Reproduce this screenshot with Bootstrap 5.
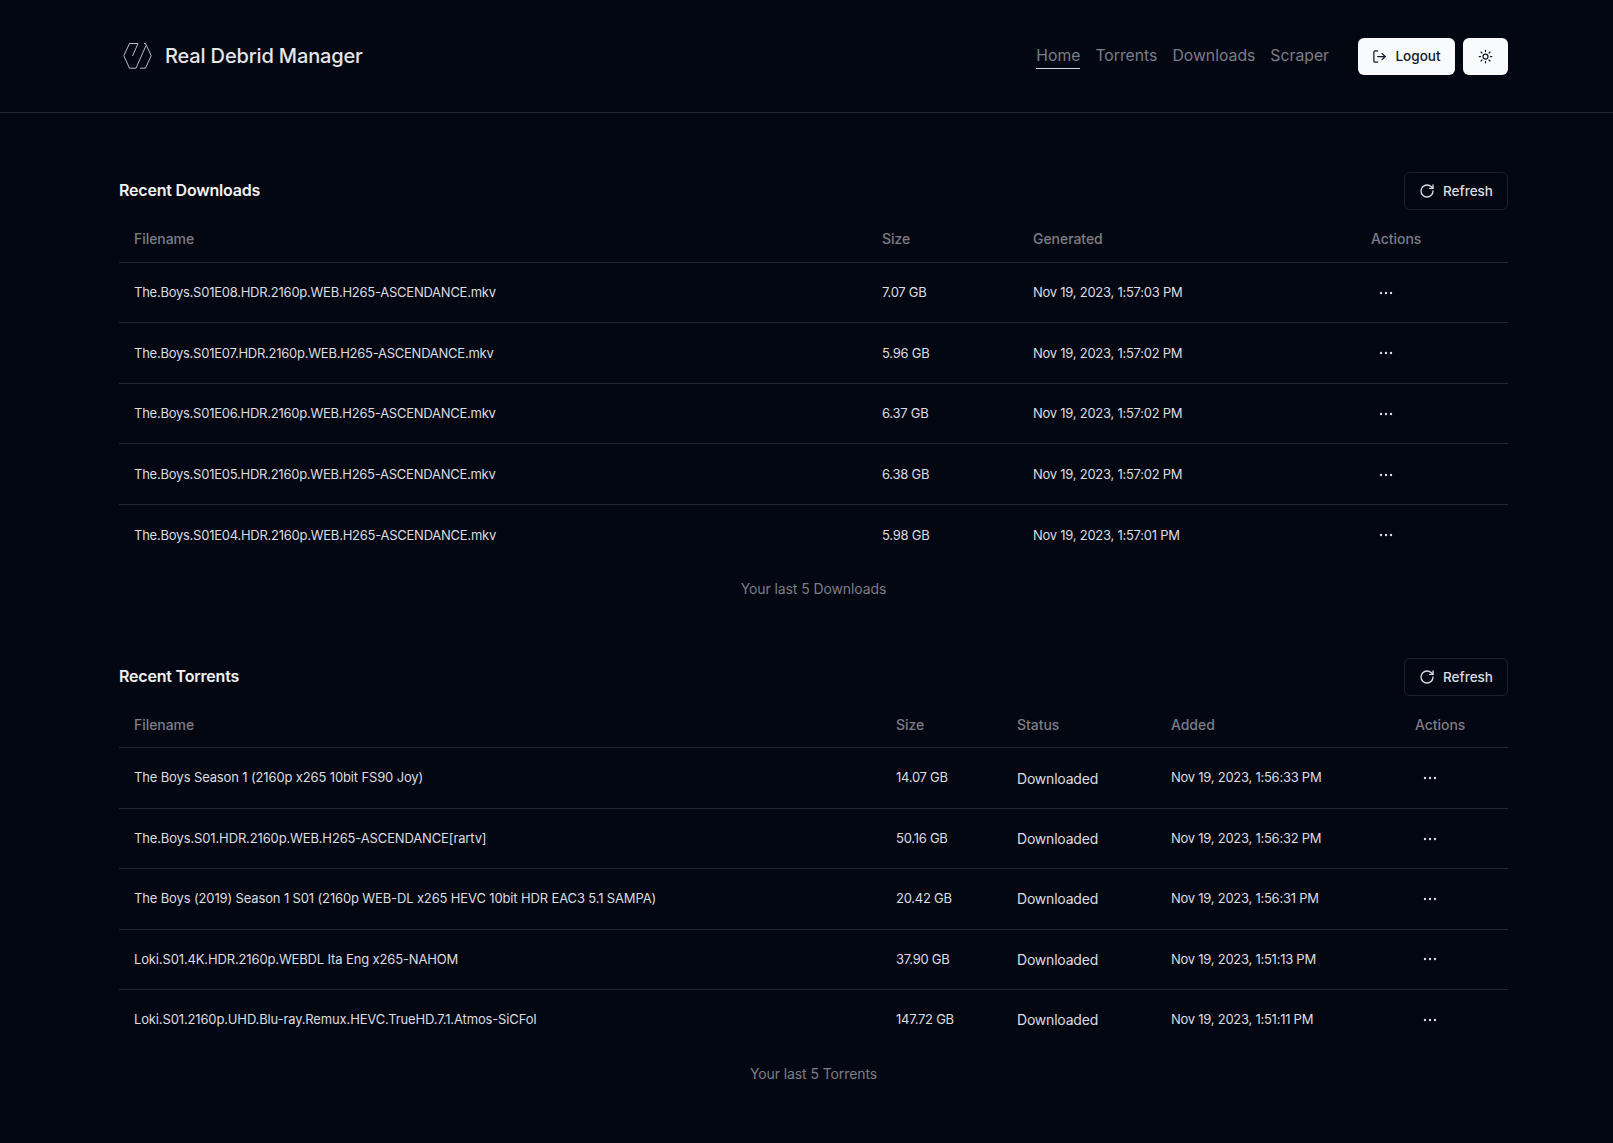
<!DOCTYPE html>
<html lang="en" data-bs-theme="dark">
<head>
<meta charset="utf-8">
<title>Real Debrid Manager</title>
<link href="https://cdn.jsdelivr.net/npm/bootstrap@5.3.0/dist/css/bootstrap.min.css" rel="stylesheet">
<style>
body{background:#030711;color:#dcdde2;font-family:"Inter","Noto Sans",sans-serif;font-size:14px;min-height:1143px}
.top-bar{height:113px;border-bottom:1px solid #24262e}
.wrap{width:1389px;margin-left:119px}
.brand-mark{margin-left:4px}
.brand-name{font-size:20px;font-weight:500;color:#e4e5e9;letter-spacing:-.15px;margin-left:13px}
.nav-row{gap:15px;margin-right:29px}
.nav-item-link{font-size:15.75px;color:#7c7d88;text-decoration:none;height:26px;line-height:26px}
.nav-item-link.on{border-bottom:1px solid #d5d6db}
.btn-light-rd{background:#f8fafc;color:#0f172a;border:0;border-radius:6px;height:37px;font-size:13.5px;font-weight:500;display:flex;align-items:center;padding:0}
.btn-logout{width:97px;gap:8px;justify-content:center}
.btn-theme{width:45px;justify-content:center}
.section-a{margin-top:59px}
.section-b{margin-top:45px}
.sec-title{font-size:16px;font-weight:600;color:#f1f2f5;margin:0;letter-spacing:-.2px}
.btn-refresh{width:104px;height:38px;background:transparent;border:1px solid #1f2129;border-radius:6px;color:#dcdde2;font-size:13.5px;font-weight:500;display:flex;align-items:center;justify-content:center;gap:8px;padding:0}
.rd-table{--bs-table-bg:transparent;--bs-table-color:#dcdde2;margin:0;table-layout:fixed;width:1389px}
.rd-table th{font-size:14px;font-weight:500;color:#7c7d88;height:52px;padding:5px 15px 0;border-bottom:1px solid #24262e;vertical-align:middle;letter-spacing:-.05px}
.rd-table td{font-size:13px;letter-spacing:-.25px;height:60.6px;padding:1px 15px 0;border-bottom:1px solid #24262e;vertical-align:middle;color:#dcdde2}
.section-b .rd-table td{padding-top:0;height:60.4px}
.rd-table td.name-wide{letter-spacing:-.14px}
.rd-table td.status-cell{font-size:14px;letter-spacing:-.2px}
.rd-table tr.nob td{border-bottom:0}
.foot-note{color:#7c7d88;text-align:center;font-size:14px;letter-spacing:-.1px;height:49px;display:flex;align-items:center;justify-content:center;margin-top:-1px}
.dots{display:block;margin-left:7px}
.w1a{width:748px}.w1b{width:151px}.w1c{width:338px}.w1d{width:152px}
.w2a{width:762px}.w2b{width:121px}.w2c{width:154px}.w2d{width:244px}.w2e{width:108px}
</style>
</head>
<body>
<header class="top-bar d-flex align-items-center">
  <div class="wrap d-flex align-items-center justify-content-between">
    <a class="d-flex align-items-center text-decoration-none" href="#">
      <svg class="brand-mark" width="29" height="26" viewBox="0 0 29 26" fill="none" stroke="#b9bdc6" stroke-width="1" stroke-linejoin="round"><path d="M15 .5H6.5L.8 12.7 6.5 25.2H13L23 2.5"/><path d="M15 .5 9.5 13"/><path d="M21 .5h1.5l5.7 12.2-5.7 12.5H17"/></svg>
      <span class="brand-name">Real Debrid Manager</span>
    </a>
    <div class="d-flex align-items-center">
      <nav class="nav-row d-flex align-items-center">
        <a class="nav-item-link on" href="#">Home</a>
        <a class="nav-item-link" href="#">Torrents</a>
        <a class="nav-item-link" href="#">Downloads</a>
        <a class="nav-item-link" href="#">Scraper</a>
      </nav>
      <button class="btn-light-rd btn-logout" type="button">
        <svg width="15" height="15" viewBox="0 0 24 24" fill="none" stroke="#0f172a" stroke-width="2" stroke-linecap="round" stroke-linejoin="round"><path d="M9 21H5a2 2 0 0 1-2-2V5a2 2 0 0 1 2-2h4"/><path d="M16 17l5-5-5-5"/><path d="M21 12H9"/></svg>
        Logout
      </button>
      <button class="btn-light-rd btn-theme ms-2" type="button" aria-label="Theme">
        <svg width="15" height="15" viewBox="0 0 24 24" fill="none" stroke="#0f172a" stroke-width="2" stroke-linecap="round"><circle cx="12" cy="12" r="4"/><path d="M12 2v2M12 20v2M4.9 4.9l1.4 1.4M17.7 17.7l1.4 1.4M2 12h2M20 12h2M6.3 17.7l-1.4 1.4M19.1 4.9l-1.4 1.4"/></svg>
      </button>
    </div>
  </div>
</header>
<main class="wrap">
  <section class="section-a">
    <div class="d-flex justify-content-between align-items-center">
      <h2 class="sec-title">Recent Downloads</h2>
      <button class="btn-refresh" type="button"><svg width="16" height="16" viewBox="0 0 24 24" fill="none" stroke="#dcdde2" stroke-width="2" stroke-linecap="round" stroke-linejoin="round"><path d="M21 12a9 9 0 1 1-9-9c2.5 0 4.8 1 6.7 2.7L21 8"/><path d="M21 3v5h-5"/></svg>Refresh</button>
    </div>
    <table class="table rd-table">
      <thead><tr><th class="w1a">Filename</th><th class="w1b">Size</th><th class="w1c">Generated</th><th class="w1d">Actions</th></tr></thead>
      <tbody>
        <tr><td>The.Boys.S01E08.HDR.2160p.WEB.H265-ASCENDANCE.mkv</td><td>7.07 GB</td><td>Nov 19, 2023, 1:57:03 PM</td><td><svg class="dots" width="16" height="16" viewBox="0 0 16 16" fill="#dcdde2"><circle cx="3" cy="8" r="1.2"/><circle cx="8" cy="8" r="1.2"/><circle cx="13" cy="8" r="1.2"/></svg></td></tr>
        <tr><td>The.Boys.S01E07.HDR.2160p.WEB.H265-ASCENDANCE.mkv</td><td>5.96 GB</td><td>Nov 19, 2023, 1:57:02 PM</td><td><svg class="dots" width="16" height="16" viewBox="0 0 16 16" fill="#dcdde2"><circle cx="3" cy="8" r="1.2"/><circle cx="8" cy="8" r="1.2"/><circle cx="13" cy="8" r="1.2"/></svg></td></tr>
        <tr><td>The.Boys.S01E06.HDR.2160p.WEB.H265-ASCENDANCE.mkv</td><td>6.37 GB</td><td>Nov 19, 2023, 1:57:02 PM</td><td><svg class="dots" width="16" height="16" viewBox="0 0 16 16" fill="#dcdde2"><circle cx="3" cy="8" r="1.2"/><circle cx="8" cy="8" r="1.2"/><circle cx="13" cy="8" r="1.2"/></svg></td></tr>
        <tr><td>The.Boys.S01E05.HDR.2160p.WEB.H265-ASCENDANCE.mkv</td><td>6.38 GB</td><td>Nov 19, 2023, 1:57:02 PM</td><td><svg class="dots" width="16" height="16" viewBox="0 0 16 16" fill="#dcdde2"><circle cx="3" cy="8" r="1.2"/><circle cx="8" cy="8" r="1.2"/><circle cx="13" cy="8" r="1.2"/></svg></td></tr>
        <tr class="nob"><td>The.Boys.S01E04.HDR.2160p.WEB.H265-ASCENDANCE.mkv</td><td>5.98 GB</td><td>Nov 19, 2023, 1:57:01 PM</td><td><svg class="dots" width="16" height="16" viewBox="0 0 16 16" fill="#dcdde2"><circle cx="3" cy="8" r="1.2"/><circle cx="8" cy="8" r="1.2"/><circle cx="13" cy="8" r="1.2"/></svg></td></tr>
      </tbody>
    </table>
    <div class="foot-note">Your last 5 Downloads</div>
  </section>
  <section class="section-b">
    <div class="d-flex justify-content-between align-items-center">
      <h2 class="sec-title">Recent Torrents</h2>
      <button class="btn-refresh" type="button"><svg width="16" height="16" viewBox="0 0 24 24" fill="none" stroke="#dcdde2" stroke-width="2" stroke-linecap="round" stroke-linejoin="round"><path d="M21 12a9 9 0 1 1-9-9c2.5 0 4.8 1 6.7 2.7L21 8"/><path d="M21 3v5h-5"/></svg>Refresh</button>
    </div>
    <table class="table rd-table">
      <thead><tr><th class="w2a">Filename</th><th class="w2b">Size</th><th class="w2c">Status</th><th class="w2d">Added</th><th class="w2e">Actions</th></tr></thead>
      <tbody>
        <tr><td class="name-wide">The Boys Season 1 (2160p x265 10bit FS90 Joy)</td><td>14.07 GB</td><td class="status-cell">Downloaded</td><td>Nov 19, 2023, 1:56:33 PM</td><td><svg class="dots" width="16" height="16" viewBox="0 0 16 16" fill="#dcdde2"><circle cx="3" cy="8" r="1.2"/><circle cx="8" cy="8" r="1.2"/><circle cx="13" cy="8" r="1.2"/></svg></td></tr>
        <tr><td class="name-wide">The.Boys.S01.HDR.2160p.WEB.H265-ASCENDANCE[rartv]</td><td>50.16 GB</td><td class="status-cell">Downloaded</td><td>Nov 19, 2023, 1:56:32 PM</td><td><svg class="dots" width="16" height="16" viewBox="0 0 16 16" fill="#dcdde2"><circle cx="3" cy="8" r="1.2"/><circle cx="8" cy="8" r="1.2"/><circle cx="13" cy="8" r="1.2"/></svg></td></tr>
        <tr><td class="name-wide">The Boys (2019) Season 1 S01 (2160p WEB-DL x265 HEVC 10bit HDR EAC3 5.1 SAMPA)</td><td>20.42 GB</td><td class="status-cell">Downloaded</td><td>Nov 19, 2023, 1:56:31 PM</td><td><svg class="dots" width="16" height="16" viewBox="0 0 16 16" fill="#dcdde2"><circle cx="3" cy="8" r="1.2"/><circle cx="8" cy="8" r="1.2"/><circle cx="13" cy="8" r="1.2"/></svg></td></tr>
        <tr><td class="name-wide">Loki.S01.4K.HDR.2160p.WEBDL Ita Eng x265-NAHOM</td><td>37.90 GB</td><td class="status-cell">Downloaded</td><td>Nov 19, 2023, 1:51:13 PM</td><td><svg class="dots" width="16" height="16" viewBox="0 0 16 16" fill="#dcdde2"><circle cx="3" cy="8" r="1.2"/><circle cx="8" cy="8" r="1.2"/><circle cx="13" cy="8" r="1.2"/></svg></td></tr>
        <tr class="nob"><td class="name-wide">Loki.S01.2160p.UHD.Blu-ray.Remux.HEVC.TrueHD.7.1.Atmos-SiCFoI</td><td>147.72 GB</td><td class="status-cell">Downloaded</td><td>Nov 19, 2023, 1:51:11 PM</td><td><svg class="dots" width="16" height="16" viewBox="0 0 16 16" fill="#dcdde2"><circle cx="3" cy="8" r="1.2"/><circle cx="8" cy="8" r="1.2"/><circle cx="13" cy="8" r="1.2"/></svg></td></tr>
      </tbody>
    </table>
    <div class="foot-note">Your last 5 Torrents</div>
  </section>
</main>
<script src="https://cdn.jsdelivr.net/npm/bootstrap@5.3.0/dist/js/bootstrap.bundle.min.js"></script>
</body>
</html>
